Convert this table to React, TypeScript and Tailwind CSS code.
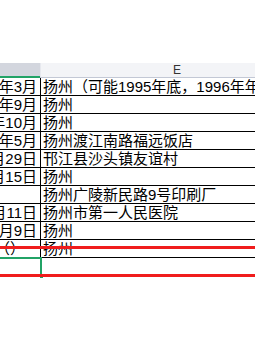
import React from "react";

const rows: { d: string; e: string }[] = [
  { d: "1995年3月", e: "扬州（可能1995年底，1996年年初）" },
  { d: "1995年9月", e: "扬州" },
  { d: "1995年10月", e: "扬州" },
  { d: "1996年5月", e: "扬州渡江南路福远饭店" },
  { d: "1996年6月29日", e: "邗江县沙头镇友谊村" },
  { d: "1996年7月15日", e: "扬州" },
  { d: "", e: "扬州广陵新民路9号印刷厂" },
  { d: "1996年9月11日", e: "扬州市第一人民医院" },
  { d: "1996年10月9日", e: "扬州" },
];

export default function App() {
  return (
    <div
      className="relative w-[255px] h-[340px] overflow-hidden bg-white text-black"
      style={{ fontFamily: "'Liberation Sans','Noto Sans CJK SC',sans-serif" }}
    >
      <div className="h-[63px]" />
      {/* column headers */}
      <div className="flex h-[15px]">
        <div className="w-[40px] shrink-0 bg-[#d3d6de] border-b-2 border-[#21a366]" />
        <div className="w-px shrink-0 bg-[#e6e8ee] border-b border-[#c3c8d5]" />
        <div className="w-[272px] shrink-0 bg-[#f3f4f7] border-b border-[#c3c8d5] flex items-center justify-center text-[12px] leading-none text-[#333]">
          E
        </div>
      </div>
      {/* data rows */}
      {rows.map((r, i) => (
        <div key={i} className="flex h-[18px] border-b border-black text-[15px] leading-[17px]">
          <div className="w-[41px] shrink-0 border-r border-black overflow-hidden flex justify-end pr-[3px]">
            <span className="whitespace-nowrap">{r.d}</span>
          </div>
          <div className="flex-1 pl-[2px] whitespace-nowrap overflow-hidden">{r.e}</div>
        </div>
      ))}
      <div className="flex h-[18px] border-b border-black text-[15px] leading-[17px]">
        <div className="w-[41px] shrink-0 border-r border-black overflow-hidden">
          <span className="whitespace-nowrap -ml-[5px] block">（）</span>
        </div>
        <div className="flex-1 pl-[2px] whitespace-nowrap overflow-hidden">扬州</div>
      </div>
      {/* selected cell */}
      <div className="flex h-[20px] -mt-px">
        <div className="relative w-[44px] -ml-[2px] h-[20px] border-2 border-[#21a366]">
          <div className="absolute -right-[4px] -bottom-[4px] w-[5px] h-[5px] bg-[#21a366] border border-white" />
        </div>
      </div>
      {/* red drawn lines */}
      <div className="absolute left-0 right-0 top-[246px] h-[3px] bg-[#f01c1c]" />
      <div className="absolute left-0 right-0 top-[274px] h-[3px] bg-[#f01c1c]" />
    </div>
  );
}
